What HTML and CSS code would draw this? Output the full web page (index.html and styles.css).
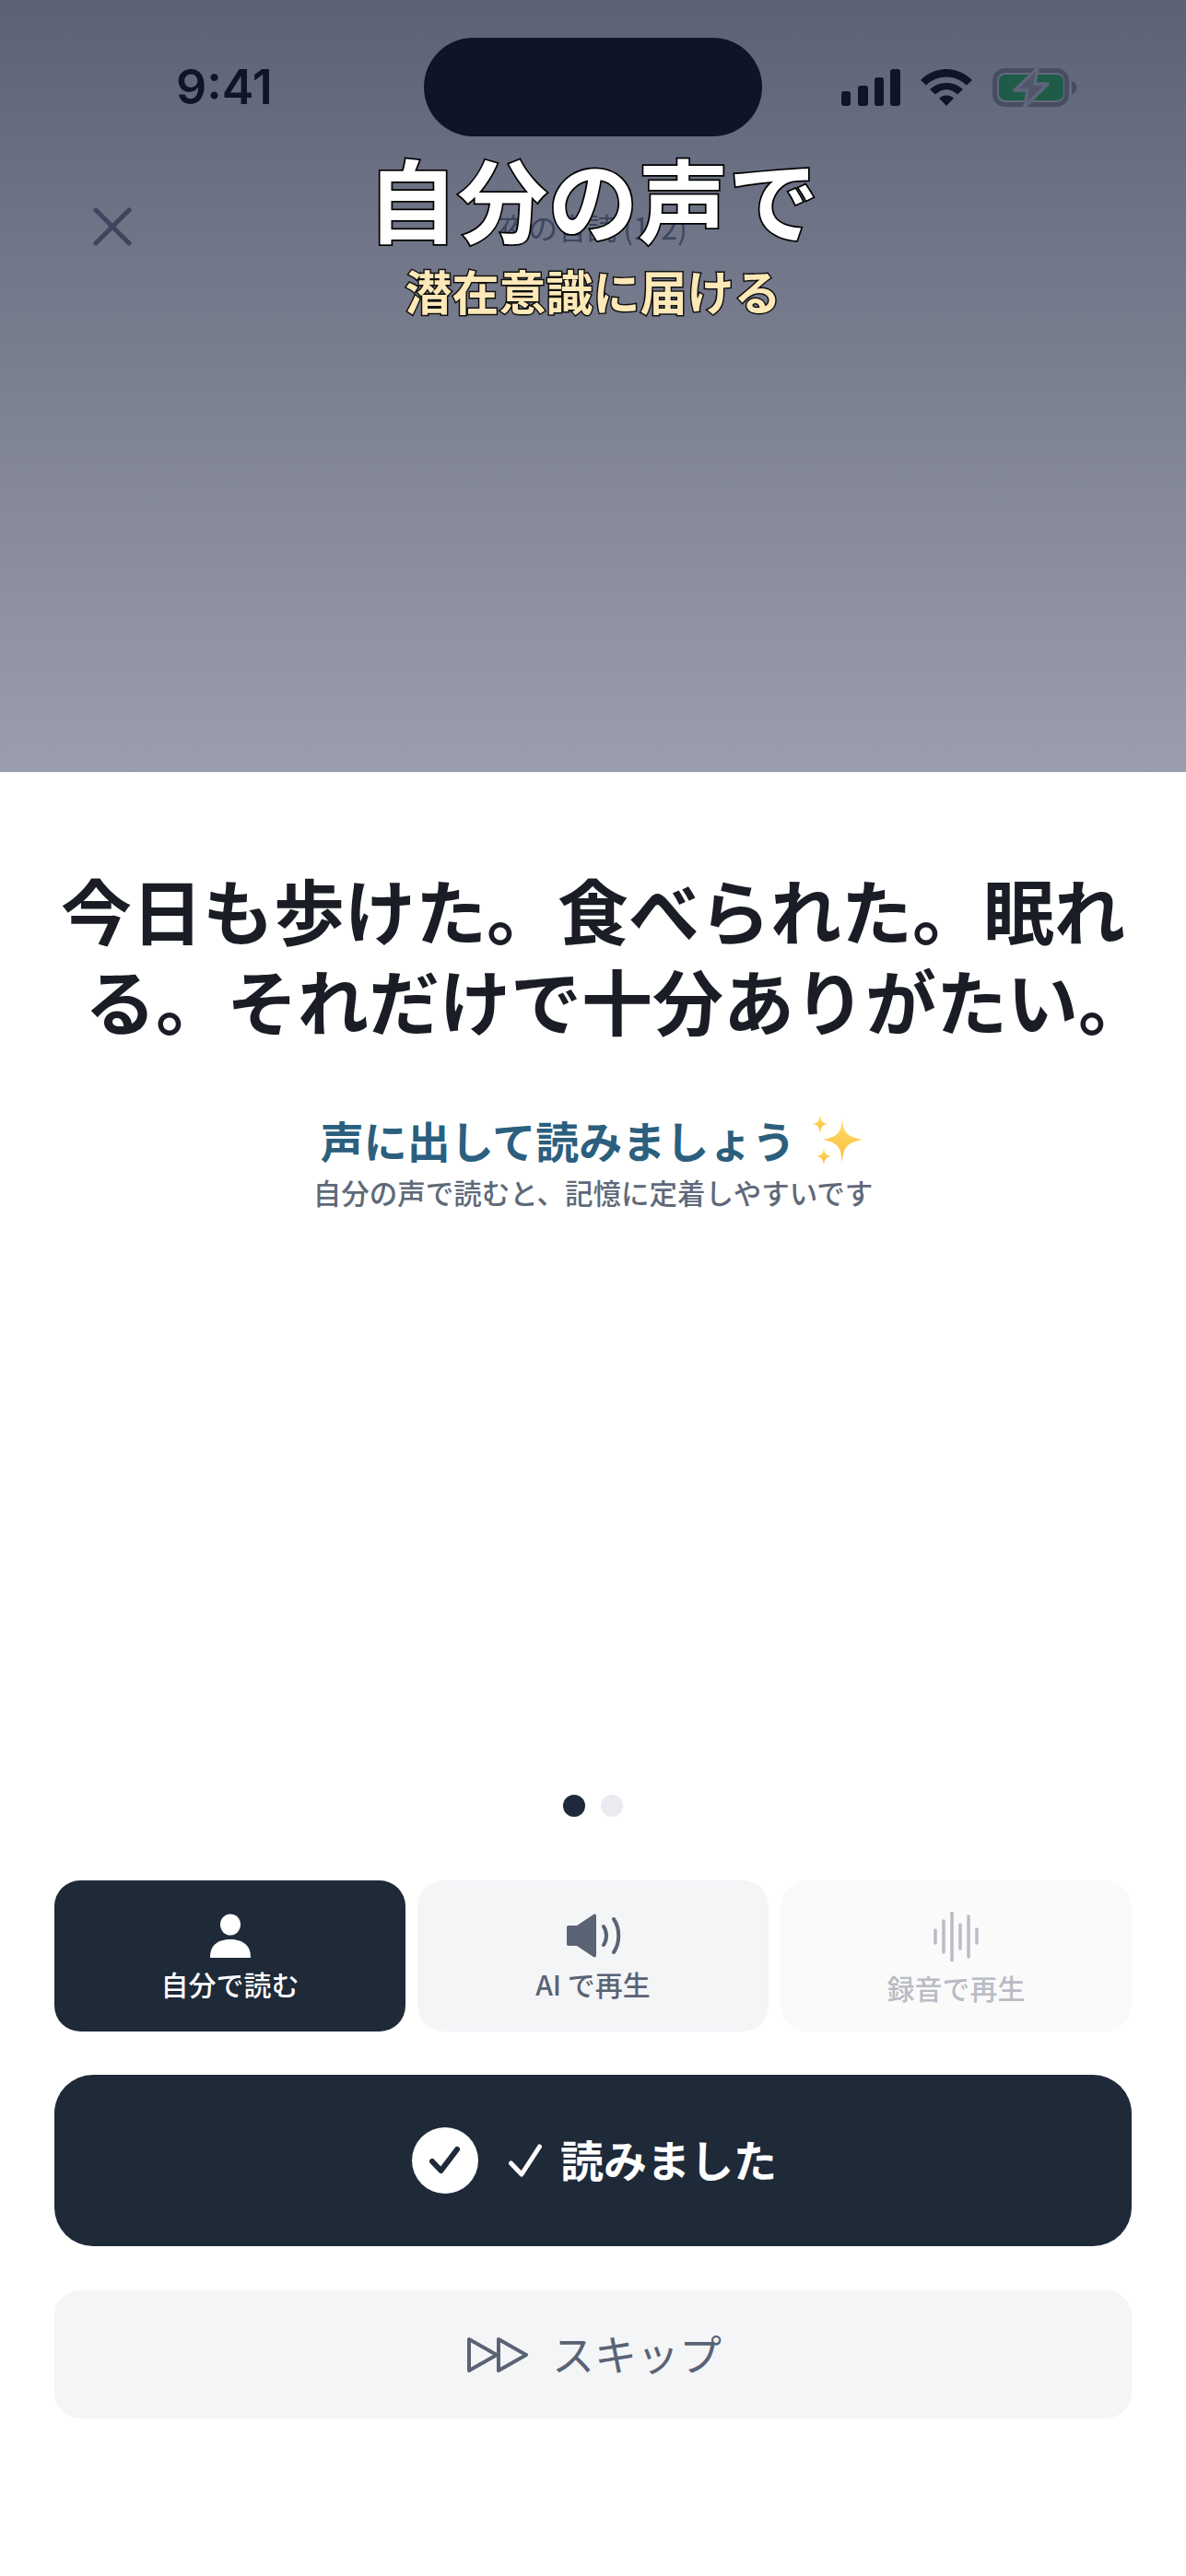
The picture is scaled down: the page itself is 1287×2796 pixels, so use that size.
FILE: index.html
```html
<!DOCTYPE html>
<html lang="ja">
<head>
<meta charset="utf-8">
<title>音読</title>
<link rel="stylesheet" href="styles.css">
</head>
<body>
<div class="app">
  <section class="hero">
    <div class="island"></div>
    <div class="status">
      <span class="time">9:41</span>
      <div class="status-icons">
        <svg class="signal" width="64" height="40" viewBox="0 0 64 40"><rect x="0" y="24" width="10" height="16" rx="3"/><rect x="18" y="18" width="11" height="22" rx="3"/><rect x="36" y="9" width="10" height="31" rx="3"/><rect x="53" y="0" width="11" height="40" rx="3"/></svg>
        <svg class="wifi" width="56" height="42" viewBox="0 0 56 42"><path d="M0 13 C16 -3 40 -3 56 13 L50 18.500 C37 6.500 19 6.500 6 18.500Z"/><path d="M10 23 C20 13.500 36 13.500 46 23 L40 28.500 C32 21.500 24 21.500 16 28.500Z"/><path d="M20 32.500 C25 28.500 31 28.500 36 32.500 L28 41Z"/></svg>
        <svg class="battery" width="92" height="44" viewBox="0 0 92 44"><rect x="2.500" y="3.500" width="78" height="37" rx="11" fill="none" stroke="#484e62" stroke-width="5"/><rect x="7" y="8" width="70" height="28" rx="7" fill="#1f5c48"/><path d="M86 15 C89.500 16 91.500 19 91.500 22 C91.500 25 89.500 28 86 29Z" fill="#484e62"/><path d="M49 1 L24 25 H38 L35 43 L60 18 H46Z" fill="#50566b" stroke="#5f657a" stroke-width="3.500" stroke-linejoin="round"/></svg>
      </div>
    </div>
    <div class="nav">
      <svg class="close" width="44" height="44" viewBox="0 0 44 44"><path d="M4 4 L40 40 M40 4 L4 40" fill="none" stroke="#3d465f" stroke-width="5" stroke-linecap="round"/></svg>
      <span class="nav-title">夜の音読 (1/2)</span>
    </div>
    <div class="overlay">
      <h2 class="overlay-main">自分の声で</h2>
      <p class="overlay-sub">潜在意識に届ける</p>
    </div>
  </section>

  <main class="content">
    <h1 class="phrase">今日も歩けた。食べられた。眠れる。それだけで十分ありがたい。</h1>
    <p class="hint">声に出して読みましょう
      <svg class="sparkles" width="58" height="58" viewBox="0 0 58 58"><defs><linearGradient id="sp" x1="0" y1="0" x2="0" y2="1"><stop offset="0" stop-color="#ffe36a"/><stop offset="1" stop-color="#fbb53a"/></linearGradient></defs><path d="M33 3 C33.500 18 36 25 56 28 C36 31 33.500 38 33 56 C32.500 38 30 31 11 28 C30 25 32.500 18 33 3Z" fill="url(#sp)"/><path d="M9 0 C9.500 7 11 10 17 11 C11 12 9.500 15 9 22 C8.500 15 7 12 1 11 C7 10 8.500 7 9 0Z" fill="url(#sp)"/><path d="M13 37 C13.500 42 15 45 21 46 C15 47 13.500 50 13 56 C12.500 50 11 47 5 46 C11 45 12.500 42 13 37Z" fill="url(#sp)"/></svg>
    </p>
    <p class="hint-sub">自分の声で読むと、記憶に定着しやすいです</p>

    <div class="dots"><span class="dot dot-on"></span><span class="dot"></span></div>

    <div class="modes">
      <button class="mode mode-on">
        <svg class="mode-icon" width="44" height="48" viewBox="0 0 44 48"><ellipse cx="22" cy="12" rx="11" ry="11.500"/><path d="M0 47 C0 34 9 28 22 28 C35 28 44 34 44 47 C44 47.500 43.500 48 43 48 H1 C0.500 48 0 47.500 0 47Z"/></svg>
        <span>自分で読む</span>
      </button>
      <button class="mode">
        <svg class="mode-icon" width="60" height="48" viewBox="0 0 60 48"><path d="M1 15 C1 13.500 2 13 3 13 H12 L30 1 C32 0 33 1 33 3 V45 C33 47 32 48 30 47 L12 35 H3 C2 35 1 34.500 1 33Z" fill="#596373"/><path d="M41 14 C45 20 45 28 41 34 M52 6 C59 16 59 32 52 42" fill="none" stroke="#596373" stroke-width="4" stroke-linecap="round"/></svg>
        <span>AI で再生</span>
      </button>
      <button class="mode mode-off">
        <svg class="wave" width="50" height="54" viewBox="0 0 50 54"><path d="M2 20 V34 M11 10 V44 M20 0 V54 M29 14 V40 M38 5 V49 M47 19 V34" fill="none" stroke="#b9bcc4" stroke-width="3.500" stroke-linecap="round"/></svg>
        <span>録音で再生</span>
      </button>
    </div>

    <button class="done">
      <span class="done-circle"><svg width="36" height="32" viewBox="0 0 36 32"><path d="M4 17 L13.500 27 L31 4" fill="none" stroke="#1e2a38" stroke-width="6" stroke-linecap="round" stroke-linejoin="round"/></svg></span>
      <svg class="done-check" width="36" height="36" viewBox="0 0 36 36"><path d="M2.500 21 L14 33 L33.500 3" fill="none" stroke="#fff" stroke-width="5" stroke-linecap="round" stroke-linejoin="round"/></svg>
      <span class="btn-label">読みました</span>
    </button>

    <button class="skip">
      <svg width="66" height="38" viewBox="0 0 66 38"><path d="M2 2 L32 19 L2 36Z M34 2 L64 19 L34 36Z" fill="none" stroke="#596373" stroke-width="4" stroke-linejoin="round"/></svg>
      <span class="btn-label">スキップ</span>
    </button>
  </main>
</div>
</body>
</html>
```
FILE: styles.css
```css
* { box-sizing: border-box; }
html, body { margin: 0; padding: 0; background: #fff; }
body {
  font-family: "Noto Sans CJK JP", "Inter", sans-serif;
}
.app {
  width: 1287px;
  height: 2796px;
  display: flex;
  flex-direction: column;
  overflow: hidden;
}

/* hero */
.hero {
  position: relative;
  height: 838px;
  padding-top: 1px;
  background: linear-gradient(180deg, #5c6276 0%, #9b9eac 100%);
  flex: none;
}
.island {
  position: absolute;
  left: 460px;
  top: 41px;
  width: 367px;
  height: 107px;
  border-radius: 54px;
  background: #0f1429;
}
.status {
  display: flex;
  justify-content: space-between;
  align-items: center;
  height: 44px;
  margin-top: 72px;
  padding: 0 118px 0 191px;
}
.time {
  font-family: "Inter", sans-serif;
  font-weight: 600;
  font-size: 52px;
  line-height: 44px;
  color: #0f1429;
}
.status-icons {
  display: flex;
  align-items: center;
  gap: 22px;
}
.signal, .wifi { fill: #0f1429; }
.nav {
  position: relative;
  display: flex;
  align-items: center;
  margin-top: 105px;
  padding-left: 100px;
  height: 48px;
}
.nav-title {
  position: absolute;
  left: 0;
  right: 0;
  text-align: center;
  font-size: 32px;
  line-height: 48px;
  color: #3d465f;
}
.overlay {
  position: absolute;
  left: 0;
  right: 0;
  top: 151px;
  text-align: center;
}
.overlay-main {
  margin: 0;
  font-size: 98px;
  line-height: 124px;
  font-weight: 700;
  color: #fff;
  -webkit-text-stroke: 3.500px #000;
  paint-order: stroke fill;
}
.overlay-sub {
  margin: 0;
  margin-top: 9px;
  font-size: 51px;
  line-height: 62px;
  font-weight: 700;
  color: #fde8b8;
  -webkit-text-stroke: 3px #111;
  paint-order: stroke fill;
}

/* content */
.content {
  flex: 1;
  display: flex;
  flex-direction: column;
  padding: 100px 59px 0;
}
.phrase {
  margin: 0 -26px 0 26px;
  text-align: center;
  text-indent: -52px;
  font-size: 77px;
  line-height: 98px;
  font-weight: 700;
  color: #1a1d25;
}
.hint {
  margin: 72px 0 0;
  display: flex;
  justify-content: center;
  align-items: center;
  gap: 18px;
  height: 60px;
  font-size: 47px;
  font-weight: 700;
  color: #2c5f7e;
}
.sparkles { margin-top: 4px; }
.hint-sub {
  margin: 6px 0 0;
  text-align: center;
  font-size: 30.500px;
  line-height: 44px;
  font-weight: 500;
  color: #5f6979;
}
.dots {
  display: flex;
  justify-content: center;
  gap: 17px;
  margin-top: 632px;
}
.dot {
  width: 24px;
  height: 24px;
  border-radius: 50%;
  background: #e9ebf0;
}
.dot-on { background: #1e293b; }
.modes {
  display: grid;
  grid-template-columns: repeat(3, 1fr);
  gap: 13px;
  margin-top: 69px;
}
.mode {
  height: 164px;
  border: 0;
  border-radius: 28px;
  background: #f4f5f7;
  color: #596373;
  font: inherit;
  font-size: 30px;
  font-weight: 500;
  display: flex;
  flex-direction: column;
  align-items: center;
  justify-content: center;
  gap: 7px;
  padding: 5px 0 0;
}
.mode span { line-height: 42px; }
.mode-on { background: #1e2a38; color: #fff; }
.mode-on .mode-icon { fill: #fff; }
.mode-off { background: #fafafb; color: #b9bcc4; padding-top: 7px; }
.done {
  margin-top: 47px;
  height: 186px;
  border: 0;
  border-radius: 42px;
  background: #1e2a38;
  color: #fff;
  font: inherit;
  font-size: 47px;
  font-weight: 700;
  display: flex;
  align-items: center;
  justify-content: center;
  padding: 0 0 0 3px;
}
.btn-label { margin-bottom: 6px; }
.done-circle {
  width: 72px;
  height: 72px;
  border-radius: 50%;
  background: #fff;
  display: flex;
  align-items: center;
  justify-content: center;
  margin-right: 33px;
}
.done-check { margin-right: 20px; }
.skip {
  margin-top: 48px;
  height: 139px;
  border: 0;
  border-radius: 28px;
  background: #f4f5f7;
  color: #596373;
  font: inherit;
  font-size: 46px;
  display: flex;
  align-items: center;
  justify-content: center;
  gap: 26px;
  padding: 0 0 0 3px;
}
```
